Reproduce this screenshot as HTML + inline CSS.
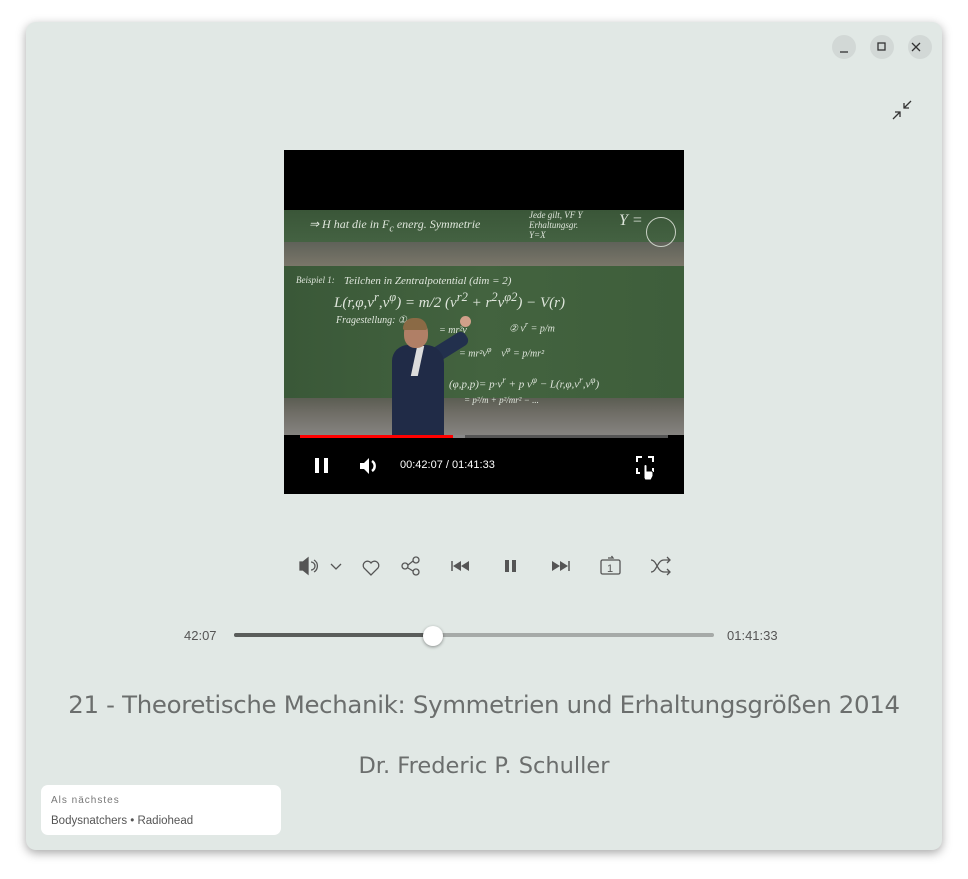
<!DOCTYPE html>
<html><head><meta charset="utf-8"><style>
*{margin:0;padding:0;box-sizing:border-box}
body{width:968px;height:879px;background:#fff;position:relative;overflow:hidden;font-family:"Liberation Sans",sans-serif}
.win{position:absolute;left:26px;top:22px;width:916px;height:828px;background:#e1e8e5;border-radius:10px;box-shadow:0 3px 10px rgba(0,0,0,.35)}
.wb{position:absolute;top:35px;width:24px;height:24px;border-radius:50%;background:#d2d8d6}
.ab{position:absolute}
.vid{position:absolute;left:284px;top:150px;width:400px;height:344px;background:#000;overflow:hidden}
.t{position:absolute;color:#555}
.chalk{position:absolute;color:#dfe6dc;font-family:"Liberation Serif",serif;font-style:italic;font-size:11px;white-space:nowrap}
</style></head><body>
<div class="win"></div>
<div class="wb" style="left:832px"></div><div class="wb" style="left:870px"></div><div class="wb" style="left:908px"></div>
<svg class="ab" style="left:832px;top:35px" width="100" height="24" fill="none" stroke="#333" stroke-width="1.3">
<path d="M8 17h8"/><rect x="46" y="8" width="7" height="7"/><path d="M80 8l8 8M88 8l-8 8"/>
</svg>
<svg class="ab" style="left:890px;top:98px" width="26" height="26" fill="none" stroke="#333" stroke-width="1.3">
<path d="M21 3l-7 7M14 5v5h5M3 21l7-7M5 14h5v5"/></svg>

<div class="vid">
 <div style="position:absolute;left:0;top:60px;width:400px;height:32px;background:linear-gradient(#3a5638,#446242)"></div>
 <div style="position:absolute;left:0;top:92px;width:400px;height:24px;background:linear-gradient(#5f6259,#7a7669)"></div>
 <div style="position:absolute;left:0;top:116px;width:400px;height:134px;background:linear-gradient(90deg,#3a5838,#43633f 50%,#3e5e3b)"></div>
 <div style="position:absolute;left:0;top:248px;width:400px;height:37px;background:linear-gradient(#5b5d52,#6f6d66 40%,#858380)"></div>
 <div class="chalk" style="left:25px;top:67px;font-size:12px">⇒ H hat die in F<sub>c</sub> energ. Symmetrie</div>
 <div class="chalk" style="left:245px;top:60px;font-size:9px">Jede gilt, VF Y<br>Erhaltungsgr.<br>Y=X</div>
 <div class="chalk" style="left:335px;top:62px;font-size:16px">Y =</div>
 <div style="position:absolute;left:362px;top:67px;width:30px;height:30px;border-radius:50%;border:1px solid #c9d1c5"></div>
 <div class="chalk" style="left:12px;top:125px;font-size:9px">Beispiel 1:</div>
 <div class="chalk" style="left:60px;top:125px;font-size:11px">Teilchen in Zentralpotential (dim = 2)</div>
 <div class="chalk" style="left:50px;top:140px;font-size:15px">L(r,φ,v<sup>r</sup>,v<sup>φ</sup>) = m/2 (v<sup>r2</sup> + r<sup>2</sup>v<sup>φ2</sup>) − V(r)</div>
 <div class="chalk" style="left:52px;top:165px;font-size:10px">Fragestellung: ①</div>
 <div class="chalk" style="left:155px;top:175px;font-size:10px">= mr²v</div>
 <div class="chalk" style="left:225px;top:170px;font-size:10px">② v<sup>r</sup> = p/m</div>
 <div class="chalk" style="left:175px;top:195px;font-size:10px">= mr²v<sup>φ</sup> &nbsp;&nbsp; v<sup>φ</sup> = p/mr²</div>
 <div class="chalk" style="left:165px;top:225px;font-size:11px">(φ,p,p)= p·v<sup>r</sup> + p v<sup>φ</sup> − L(r,φ,v<sup>r</sup>,v<sup>φ</sup>)</div>
 <div class="chalk" style="left:180px;top:245px;font-size:9px">= p²/m + p²/mr² − ...</div>
 <!-- person -->
 <div style="position:absolute;left:140px;top:205px;width:50px;height:15px;background:#22304d;transform:rotate(-32deg);transform-origin:0 50%;border-radius:6px"></div>
 <div style="position:absolute;left:108px;top:195px;width:52px;height:95px;background:#202b47;border-radius:16px 18px 0 0"></div>
 <div style="position:absolute;left:130px;top:196px;width:7px;height:30px;background:#dcdcdc;transform:skewX(-12deg)"></div>
 <div style="position:absolute;left:120px;top:170px;width:24px;height:28px;background:#b07f66;border-radius:45%"></div>
 <div style="position:absolute;left:119px;top:168px;width:24px;height:12px;background:#8b6a45;border-radius:12px 12px 2px 2px"></div>
 <div style="position:absolute;left:176px;top:166px;width:11px;height:11px;background:#d1a08a;border-radius:50%"></div>
 <!-- controls -->
 <div style="position:absolute;left:0;top:285px;width:400px;height:59px;background:#000"></div>
 <div style="position:absolute;left:16px;top:285px;width:368px;height:3px;background:#555"></div>
 <div style="position:absolute;left:16px;top:285px;width:165px;height:3px;background:#888"></div>
 <div style="position:absolute;left:16px;top:285px;width:153px;height:3px;background:#f00"></div>
 <div style="position:absolute;left:31px;top:308px;width:4px;height:15px;background:#fff"></div>
 <div style="position:absolute;left:40px;top:308px;width:4px;height:15px;background:#fff"></div>
 <svg class="ab" style="left:75px;top:306px" width="20" height="20"><path d="M1 7h4l5-5v16l-5-5H1z" fill="#fff"/><path d="M13 5a6 6 0 0 1 0 10" stroke="#fff" stroke-width="2.5" fill="none"/></svg>
 <div style="position:absolute;left:116px;top:309px;color:#fff;font-size:11px">00:42:07 / 01:41:33</div>
 <svg class="ab" style="left:352px;top:306px" width="22" height="26" fill="none" stroke="#fff" stroke-width="2"><path d="M1 6V1h5M12 1h5v5M1 12v5h3M17 12v4"/><path d="M8 22v-12a1.5 1.5 0 0 1 3 0v5h4a2 2 0 0 1 2 2v3l-2 4h-6z" fill="#fff" stroke="#000" stroke-width="1"/></svg>
</div>

<svg class="ab" style="left:295px;top:552px" width="380" height="30" fill="none" stroke="#555" stroke-width="1.3">
<path d="M5 10h3l5-4v16l-5-4H5z" fill="#555"/><path d="M16 10a4 4 0 0 1 0 8M19 8a7 7 0 0 1 0 12"/>
<path d="M36 12l5 5 5-5"/>
<path d="M76 23l-7-7a4.2 4.2 0 0 1 7-5 4.2 4.2 0 0 1 7 5z"/>
<circle cx="110" cy="14" r="3"/><circle cx="121" cy="8" r="3"/><circle cx="121" cy="20" r="3"/><path d="M113 13l5-4M113 16l5 3"/>
<path d="M157 9v10" stroke-width="1.5"/><path d="M166 9l-8 5 8 5zM174 9l-8 5 8 5z" fill="#555" stroke="none"/>
<rect x="210" y="8" width="4" height="12" fill="#555" stroke="none"/><rect x="217" y="8" width="4" height="12" fill="#555" stroke="none"/>
<path d="M257 9l8 5-8 5zM265 9l8 5-8 5z" fill="#555" stroke="none"/><path d="M274 9v10" stroke-width="1.5"/>
<rect x="306" y="8" width="19" height="14" rx="1.5"/><text x="312" y="20" font-size="11" fill="#555" stroke="none" font-family="Liberation Sans">1</text><path d="M313 6h5l-1.5-2"/>
<path d="M356 8c6 0 6 12 13 12h5M356 20c6 0 6-12 13-12h5M372 5l3 3-3 3M372 17l3 3-3 3"/>
</svg>

<div class="t" style="left:184px;top:628px;font-size:13px">42:07</div>
<div style="position:absolute;left:234px;top:633px;width:480px;height:4px;background:#a6aaa8;border-radius:2px"></div>
<div style="position:absolute;left:234px;top:633px;width:200px;height:4px;background:#5a5d5b;border-radius:2px"></div>
<div style="position:absolute;left:423px;top:626px;width:20px;height:20px;background:#fff;border-radius:50%;box-shadow:0 1px 3px rgba(0,0,0,.4)"></div>
<div class="t" style="left:727px;top:628px;font-size:13px">01:41:33</div>

<div class="t" style="left:0;width:968px;text-align:center;top:690px;font-size:24.4px;color:#6b6e6d;font-family:'DejaVu Sans',sans-serif;letter-spacing:-0.3px">21 - Theoretische Mechanik: Symmetrien und Erhaltungsgrößen 2014</div>
<div class="t" style="left:0;width:968px;text-align:center;top:753px;font-size:22.5px;color:#6b6e6d;font-family:'DejaVu Sans',sans-serif">Dr. Frederic P. Schuller</div>

<div style="position:absolute;left:41px;top:785px;width:240px;height:50px;background:#fff;border-radius:7px"></div>
<div class="t" style="left:51px;top:795px;font-size:10px;color:#777;letter-spacing:1px">Als nächstes</div>
<div class="t" style="left:51px;top:815px;font-size:11.5px;color:#555">Bodysnatchers • Radiohead</div>
</body></html>
